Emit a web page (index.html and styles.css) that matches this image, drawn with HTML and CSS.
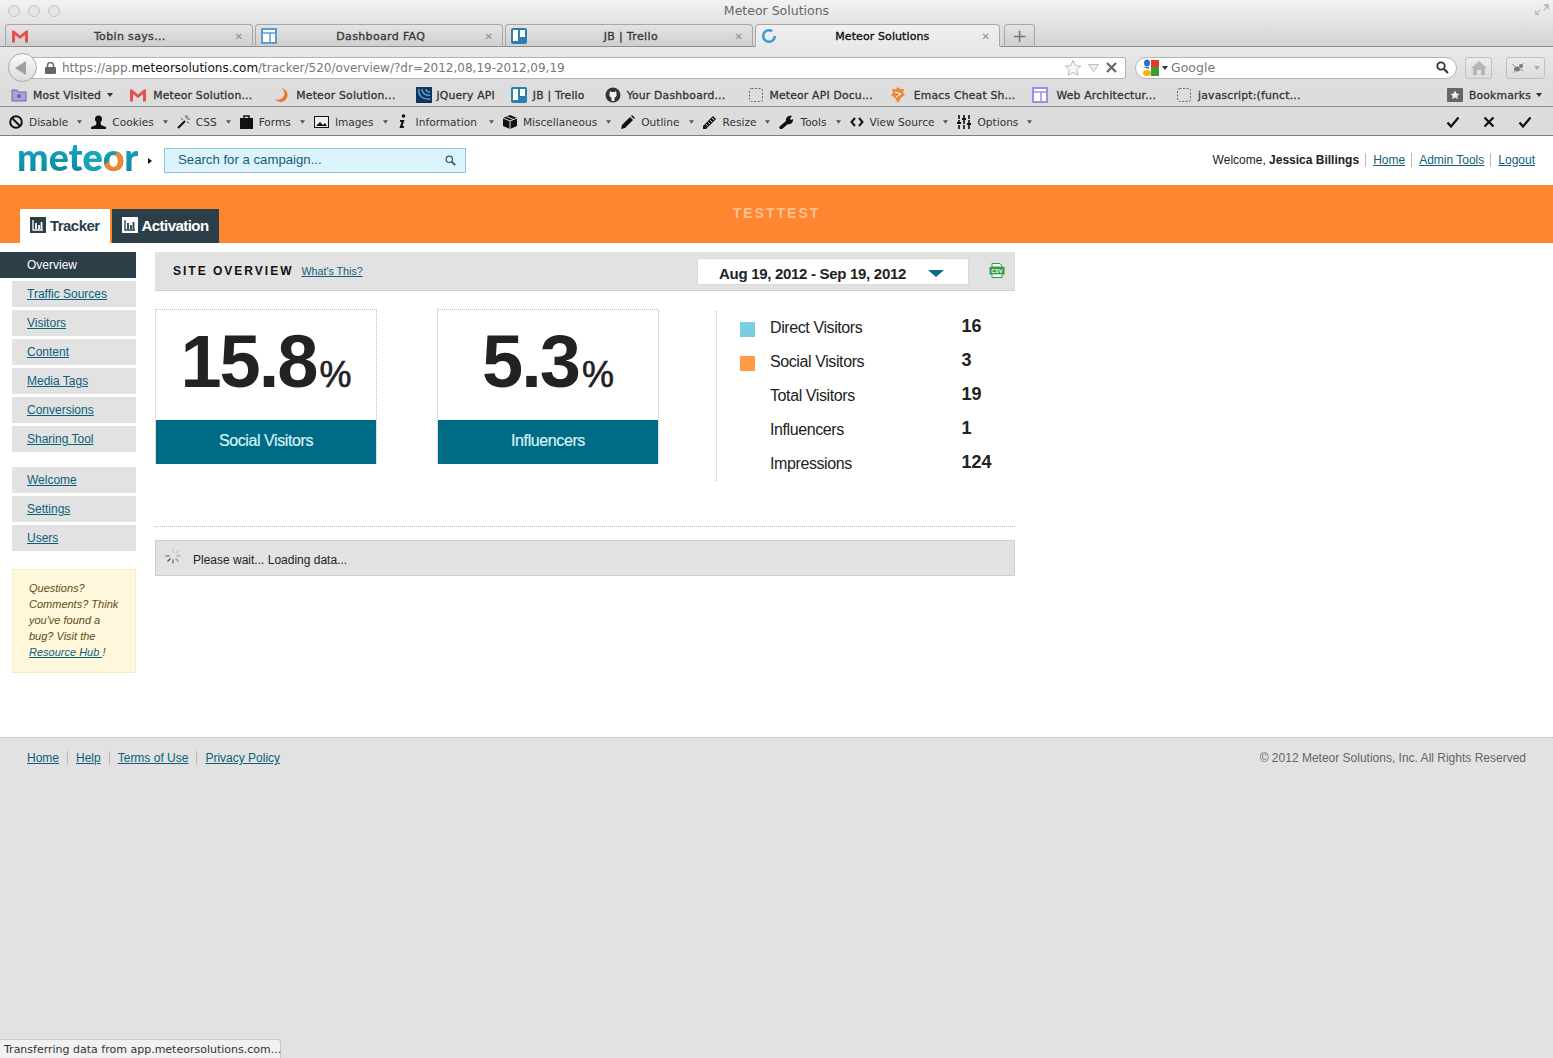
FILE: index.html
```html
<!DOCTYPE html>
<html lang="en">
<head>
<meta charset="utf-8">
<title>Meteor Solutions</title>
<link rel="stylesheet" href="styles.css">
</head>
<body>
<svg class="defs" width="0" height="0" aria-hidden="true">
  <symbol id="gm" viewBox="0 0 18 14"><path d="M1 1.500h2l6 5 6-5h2v12h-3V6l-5 4-5-4v7.500H1z" fill="#e2504f"/></symbol>
  <symbol id="tpl" viewBox="0 0 16 16"><rect x="1" y="1" width="14" height="14" fill="#fff" stroke="#5b9bd5" stroke-width="2"/><path d="M1 5h14M9 5v10" stroke="#5b9bd5" stroke-width="1.500"/></symbol>
  <symbol id="tre" viewBox="0 0 16 16"><rect width="16" height="16" rx="2" fill="#2a7fb0"/><rect x="2" y="2" width="5" height="11" fill="#fff"/><rect x="9" y="2" width="5" height="7" fill="#fff"/></symbol>
  <symbol id="dash" viewBox="0 0 14 14"><rect x=".5" y=".5" width="13" height="13" rx="2" fill="none" stroke="#666" stroke-dasharray="2 1.500"/></symbol>
  <symbol id="down" viewBox="0 0 6 4"><path d="M0 0h6L3 4z" fill="currentColor"/></symbol>
  <symbol id="chart" viewBox="0 0 16 16"><rect width="16" height="16" fill="currentColor"/><path d="M3 3v10h10" stroke="var(--bars)" stroke-width="1.300" fill="none"/><path d="M6 6v6M9 8v4M11.500 5v7" stroke="var(--bars)" stroke-width="1.800" fill="none"/></symbol>
  <symbol id="check" viewBox="0 0 14 12"><path d="M1.500 6.500 5 10.500 12.500 1.500" fill="none" stroke="#111" stroke-width="2.200"/></symbol>
</svg>

<header class="chrome">
  <div class="titlebar">
    <div class="lights"><i></i><i></i><i></i></div>
    <div class="wintitle">Meteor Solutions</div>
    <svg class="expand" width="16" height="16" viewBox="0 0 16 16"><path d="M9 2h6v6l-2-2-3 3-1-1 3-3zM1 8l2 2 3-3 1 1-3 3 2 2H1z" fill="#bdbdbd"/></svg>
  </div>
  <div class="tabstrip">
    <div class="tab"><svg class="fav" width="18" height="14"><use href="#gm"/></svg><span class="tabtext tabtext-first">Tobin says...</span><span class="tabx">✕</span></div>
    <div class="tab"><svg class="fav" width="16" height="16"><use href="#tpl"/></svg><span class="tabtext">Dashboard FAQ</span><span class="tabx">✕</span></div>
    <div class="tab"><svg class="fav" width="16" height="16"><use href="#tre"/></svg><span class="tabtext">JB | Trello</span><span class="tabx">✕</span></div>
    <div class="tab tab-active"><svg class="fav" width="16" height="16" viewBox="0 0 16 16"><circle cx="8" cy="8" r="5.800" fill="none" stroke="#3a9bd8" stroke-width="2.600" stroke-dasharray="30 6.500"/></svg><span class="tabtext">Meteor Solutions</span><span class="tabx">✕</span></div>
    <div class="tab tab-new">+</div>
  </div>
  <div class="navbar">
    <button class="back" type="button"><svg width="12" height="14" viewBox="0 0 12 14"><path d="M11 0v14L0 7z" fill="#a0a0a0"/></svg></button>
    <div class="urlbar">
      <svg width="11" height="12" viewBox="0 0 11 12"><path d="M2.500 5V3.500a3 3 0 0 1 6 0V5" fill="none" stroke="#666" stroke-width="1.500"/><rect y="5" width="11" height="7" rx="1" fill="#666"/></svg>
      <span class="url">https://app.<b>meteorsolutions.com</b>/tracker/520/overview/?dr=2012,08,19-2012,09,19</span>
      <svg class="star" width="18" height="18" viewBox="0 0 18 18"><path d="M9 1.500l2.300 5 5.400.6-4 3.700 1.100 5.400L9 13.500 4.200 16.200l1.100-5.400-4-3.700 5.400-.6z" fill="#f6f6f6" stroke="#bbb"/></svg>
      <svg class="dropv" width="11" height="8" viewBox="0 0 11 8"><path d="M.5.500h10L5.500 7.500z" fill="#eee" stroke="#bbb"/></svg>
      <svg width="11" height="11" viewBox="0 0 11 11"><path d="M1 1l9 9M10 1l-9 9" stroke="#666" stroke-width="2.200"/></svg>
    </div>
    <div class="searchbar">
      <svg width="18" height="18" viewBox="0 0 18 18"><rect x="9" y="1" width="8" height="7" fill="#e53b2e"/><rect x="9" y="8" width="8" height="9" fill="#3f9c35"/><ellipse cx="5" cy="4" rx="3" ry="3.500" fill="#2a6fd0"/><ellipse cx="5" cy="14" rx="4" ry="3" fill="#f4b400"/><path d="M1 8h6v2z" fill="#2a6fd0"/></svg>
      <svg class="mini" width="6" height="4"><use href="#down"/></svg>
      <span class="searchtext">Google</span>
      <svg class="glass" width="13" height="13" viewBox="0 0 13 13"><circle cx="5" cy="5" r="3.700" fill="none" stroke="#333" stroke-width="1.800"/><path d="M8 8l4 4" stroke="#333" stroke-width="2.200"/></svg>
    </div>
    <button class="navbtn home" type="button"><svg width="16" height="14" viewBox="0 0 16 14"><path d="M8 0l8 7h-2v7h-4V9H6v5H2V7H0z" fill="#b5b5b5"/></svg></button>
    <button class="navbtn ext" type="button"><svg width="16" height="12" viewBox="0 0 16 12"><ellipse cx="6" cy="7" rx="3" ry="2.500" fill="#777"/><circle cx="10" cy="4" r="2" fill="#777"/><path d="M1 2l4 3M13 1l-3 3M2 11l3-3M12 9L9 7" stroke="#999"/></svg><svg class="mini pale" width="6" height="4"><use href="#down"/></svg></button>
  </div>
  <nav class="bookmarks">
    <div class="bm bm-mv"><svg width="16" height="14" viewBox="0 0 16 14"><path d="M1 2h5l1 2h8v9H1z" fill="#a9a3dc" stroke="#6c66a8"/><circle cx="8" cy="8" r="2" fill="#6c66a8"/></svg><span>Most Visited</span><svg class="mini" width="6" height="4"><use href="#down"/></svg></div>
    <div class="bm bm-g1"><svg width="18" height="14"><use href="#gm"/></svg><span>Meteor Solution...</span></div>
    <div class="bm bm-g2"><svg width="16" height="16" viewBox="0 0 16 16"><path d="M8 1a7 7 0 0 1-1 14 7 7 0 0 1-5-3 6.500 6.500 0 0 0 9-3 6 6 0 0 0-3-8z" fill="#f0711c"/></svg><span>Meteor Solution...</span></div>
    <div class="bm bm-g3"><svg width="16" height="16" viewBox="0 0 16 16"><rect width="16" height="16" fill="#12345a"/><path d="M3 2c-1 6 3 11 11 10M6 2c0 4 3 7 8 6M10 2c0 2 2 3 4 3" fill="none" stroke="#5aa9e6" stroke-width="1.400"/></svg><span>jQuery API</span></div>
    <div class="bm bm-g4"><svg width="16" height="16"><use href="#tre"/></svg><span>JB | Trello</span></div>
    <div class="bm bm-g5"><svg width="16" height="16" viewBox="0 0 16 16"><circle cx="8" cy="8" r="7.500" fill="#333"/><path d="M5 4l1.500 1h3L11 4l.5 2.500c.6 2.500-.8 4-2 4.200V14h-3v-3.300c-1.200-.2-2.600-1.700-2-4.200z" fill="#f3f3f3"/></svg><span>Your Dashboard...</span></div>
    <div class="bm bm-g6"><svg width="14" height="14"><use href="#dash"/></svg><span>Meteor API Docu...</span></div>
    <div class="bm bm-g7"><svg width="14" height="16" viewBox="0 0 14 16"><path d="M7 0l2 2 4 0-1 4 2 2-4 3-3 5-3-5-4-3 2-2-1-4h4z" fill="#ec8a3c"/><path d="M4 5l6 2-5 3" stroke="#fff" fill="none"/></svg><span>Emacs Cheat Sh...</span></div>
    <div class="bm bm-g8"><svg width="16" height="16" viewBox="0 0 16 16"><rect x="1" y="1" width="14" height="14" fill="#fff" stroke="#9a8fe0" stroke-width="2"/><path d="M1 5h14M9 5v10" stroke="#9a8fe0" stroke-width="1.500"/></svg><span>Web Architectur...</span></div>
    <div class="bm bm-g9"><svg width="14" height="14"><use href="#dash"/></svg><span>javascript:(funct...</span></div>
    <div class="bm bm-all"><svg width="16" height="14" viewBox="0 0 16 14"><rect width="16" height="14" rx="1" fill="#666"/><path d="M8 2.500l1.500 3 3 .4-2.200 2.100.6 3L8 9.500l-2.900 1.500.6-3L3.500 5.900l3-.4z" fill="#eee"/></svg><span>Bookmarks</span><svg class="mini" width="6" height="4"><use href="#down"/></svg></div>
  </nav>
  <nav class="devbar">
    <div class="dev"><svg width="14" height="14" viewBox="0 0 14 14"><circle cx="7" cy="7" r="5.800" fill="none" stroke="#111" stroke-width="2"/><path d="M3 3l8 8" stroke="#111" stroke-width="2"/></svg><span>Disable</span><svg class="mini" width="5" height="4"><use href="#down"/></svg></div>
    <div class="dev"><svg width="15" height="14" viewBox="0 0 15 14"><circle cx="7.500" cy="4" r="3.500" fill="#111"/><path d="M5.500 7h4l.5 3 5 2v2H0v-2l5-2z" fill="#111"/></svg><span>Cookies</span><svg class="mini" width="5" height="4"><use href="#down"/></svg></div>
    <div class="dev"><svg width="13" height="14" viewBox="0 0 13 14"><path d="M1 13l7-7" stroke="#111" stroke-width="2"/><path d="M9 0v3M13 4h-3M4 3l2 2M12 8l-2-1M11 1L9.500 3" stroke="#555"/></svg><span>CSS</span><svg class="mini" width="5" height="4"><use href="#down"/></svg></div>
    <div class="dev"><svg width="13" height="14" viewBox="0 0 13 14"><rect y="3" width="13" height="11" fill="#111"/><path d="M4 3V1h5v2" fill="none" stroke="#111" stroke-width="1.500"/></svg><span>Forms</span><svg class="mini" width="5" height="4"><use href="#down"/></svg></div>
    <div class="dev"><svg width="15" height="12" viewBox="0 0 15 12"><rect x=".5" y=".5" width="14" height="11" fill="#eee" stroke="#111"/><path d="M2 10l4-4 3 3 2-2 2 3z" fill="#111"/></svg><span>Images</span><svg class="mini" width="5" height="4"><use href="#down"/></svg></div>
    <div class="dev dev-info"><svg width="10" height="15" viewBox="0 0 10 15"><circle cx="6.500" cy="2" r="1.800" fill="#111"/><path d="M3 6h4.500L5.500 12l2 .3-1 1.700H2.500L4.500 8 3 7.800z" fill="#111"/></svg><span>Information</span><svg class="mini" width="5" height="4"><use href="#down"/></svg></div>
    <div class="dev"><svg width="14" height="14" viewBox="0 0 14 14"><path d="M7 0l7 3v8l-7 3-7-3V3z" fill="#111"/><path d="M0 3l7 3 7-3M7 6v8M3.500 1.500l7 3" stroke="#ddd" fill="none"/></svg><span>Miscellaneous</span><svg class="mini" width="5" height="4"><use href="#down"/></svg></div>
    <div class="dev"><svg width="15" height="14" viewBox="0 0 15 14"><path d="M1 14l1-4 8-8 3 3-8 8z" fill="#111"/><path d="M11 1l1-1 3 3-1 1z" fill="#111"/></svg><span>Outline</span><svg class="mini" width="5" height="4"><use href="#down"/></svg></div>
    <div class="dev"><svg width="14" height="14" viewBox="0 0 14 14"><path d="M0 11L10 1l3 3L3 14H0z" fill="#111"/><path d="M3 9l2 2M5 7l2 2M7 5l2 2M9 3l2 2" stroke="#ddd"/></svg><span>Resize</span><svg class="mini" width="5" height="4"><use href="#down"/></svg></div>
    <div class="dev"><svg width="15" height="14" viewBox="0 0 15 14"><path d="M1 14l-1-2 7-6c-.6-3 2-6 6-5l-2 2.500 1 1.500 2-1c.5 3-2 6-5 5l-6 5z" fill="#111"/></svg><span>Tools</span><svg class="mini" width="5" height="4"><use href="#down"/></svg></div>
    <div class="dev"><svg width="14" height="10" viewBox="0 0 14 10"><path d="M5 1L1.500 5 5 9M9 1l3.500 4L9 9" fill="none" stroke="#111" stroke-width="2"/></svg><span>View Source</span><svg class="mini" width="5" height="4"><use href="#down"/></svg></div>
    <div class="dev"><svg width="14" height="14" viewBox="0 0 14 14"><path d="M2 0v14M7 0v14M12 0v14" stroke="#111" stroke-width="1.600" stroke-dasharray="4 1"/><path d="M0 8h4M5 4h4M10 9h4" stroke="#111" stroke-width="2"/></svg><span>Options</span><svg class="mini" width="5" height="4"><use href="#down"/></svg></div>
    <div class="devright">
      <svg width="14" height="12"><use href="#check"/></svg>
      <svg width="12" height="12" viewBox="0 0 12 12"><path d="M1.500 1.500l9 9M10.500 1.500l-9 9" stroke="#111" stroke-width="2.300"/></svg>
      <svg width="14" height="12"><use href="#check"/></svg>
    </div>
  </nav>
</header>

<div class="page">
  <div class="sitehead">
    <div class="logo">met<span class="logo-e">e</span><span class="logo-o">o</span>r</div>
    <span class="caret"></span>
    <div class="campaign"><span>Search for a campaign...</span><svg width="11" height="11" viewBox="0 0 11 11"><circle cx="4.300" cy="4.300" r="3.200" fill="none" stroke="#1c5f78" stroke-width="1.200"/><path d="M6.800 6.800l3.400 3.400" stroke="#1c5f78" stroke-width="1.800"/></svg></div>
    <div class="welcome"><span class="hello">Welcome, <b>Jessica Billings</b></span><a href="#">Home</a><a href="#">Admin Tools</a><a href="#">Logout</a></div>
  </div>

  <div class="band">
    <div class="bandtabs">
      <a class="bandtab bandtab-on" href="#"><svg width="16" height="16"><use href="#chart"/></svg>Tracker</a>
      <a class="bandtab bandtab-off" href="#"><svg width="16" height="16"><use href="#chart"/></svg>Activation</a>
    </div>
    <div class="bandtitle">TESTTEST</div>
  </div>

  <div class="main">
    <aside class="side">
      <ul class="menu">
        <li class="active"><a href="#">Overview</a></li>
        <li><a href="#">Traffic Sources</a></li>
        <li><a href="#">Visitors</a></li>
        <li><a href="#">Content</a></li>
        <li><a href="#">Media Tags</a></li>
        <li><a href="#">Conversions</a></li>
        <li><a href="#">Sharing Tool</a></li>
      </ul>
      <ul class="menu menu2">
        <li><a href="#">Welcome</a></li>
        <li><a href="#">Settings</a></li>
        <li><a href="#">Users</a></li>
      </ul>
      <div class="note">Questions? Comments? Think you've found a bug? Visit the <a href="#">Resource Hub </a>!</div>
    </aside>

    <section class="content">
      <div class="conthead">
        <h1>SITE OVERVIEW</h1>
        <a class="whats" href="#">What's This?</a>
        <div class="daterange"><span>Aug 19, 2012 - Sep 19, 2012</span><i class="tri"></i></div>
        <svg class="csv" width="16" height="15" viewBox="0 0 16 15"><path d="M3 3V.5h8L13 3v1H3z" fill="#fff" stroke="#2f9a3f"/><rect x=".5" y="4" width="15" height="7.500" fill="#2f9a3f"/><text x="8" y="10.200" class="csvtext">CSV</text><path d="M3 11.500v3h10v-3" fill="#fff" stroke="#2f9a3f"/></svg>
      </div>

      <div class="stats">
        <div class="card">
          <div class="big">15.8<small>%</small></div>
          <div class="cardlabel">Social Visitors</div>
        </div>
        <div class="card">
          <div class="big">5.3<small>%</small></div>
          <div class="cardlabel">Influencers</div>
        </div>
        <dl class="legend">
          <div class="row row1"><i class="sw sw-blue"></i><dt>Direct Visitors</dt><dd>16</dd></div>
          <div class="row"><i class="sw sw-orange"></i><dt>Social Visitors</dt><dd>3</dd></div>
          <div class="row"><i class="sw"></i><dt>Total Visitors</dt><dd>19</dd></div>
          <div class="row"><i class="sw"></i><dt>Influencers</dt><dd>1</dd></div>
          <div class="row"><i class="sw"></i><dt>Impressions</dt><dd>124</dd></div>
        </dl>
      </div>

      <div class="loading">
        <svg width="16" height="16" viewBox="0 0 16 16"><g stroke-width="1.500" stroke-linecap="round"><path d="M8 1v3" stroke="#ccc"/><path d="M13 3l-2 2" stroke="#c4c4c4"/><path d="M15 8h-3" stroke="#b5b5b5"/><path d="M13 13l-2-2" stroke="#999"/><path d="M8 15v-3" stroke="#777"/><path d="M3 13l2-2" stroke="#555"/><path d="M1 8h3" stroke="#888"/><path d="M3 3l2 2" stroke="#ddd"/></g></svg>
        <span>Please wait... Loading data...</span>
      </div>
    </section>
  </div>

  <footer class="foot">
    <div class="footlinks"><a href="#">Home</a><a href="#">Help</a><a href="#">Terms of Use</a><a href="#">Privacy Policy</a></div>
    <div class="copy">© 2012 Meteor Solutions, Inc. All Rights Reserved</div>
  </footer>
</div>

<div class="status">Transferring data from app.meteorsolutions.com...</div>
</body>
</html>
```

FILE: styles.css
```css
* { box-sizing: border-box; }
html, body { margin: 0; height: 100%; overflow: hidden; }
body { display: flex; flex-direction: column; font-family: "Liberation Sans", Arial, sans-serif; background: #fff; color: #222; height: 1058px; position: relative; }
a { color: #0e5f79; }
.defs { position: absolute; }
svg { display: block; flex: none; }
ul { list-style: none; margin: 0; padding: 0; }

/* browser chrome */
.chrome { flex: none; font-family: "DejaVu Sans", sans-serif; font-size: 11px; color: #333; }
.titlebar { height: 24px; display: flex; align-items: center; position: relative; background: linear-gradient(#f2f2f2, #e2e2e2); }
.lights { display: flex; gap: 8px; padding: 0 0 3px 8px; }
.lights i { width: 12px; height: 12px; border-radius: 50%; border: 1px solid #c3c3c3; background: #e6e6e6; }
.wintitle { position: absolute; left: 0; right: 0; top: 3px; text-align: center; font-size: 12.500px; line-height: 16px; color: #666; }
.expand { margin-left: auto; margin-right: 3px; margin-top: -5px; }
.tabstrip { height: 23px; display: flex; padding-left: 5px; gap: 2px; align-items: flex-end; background: linear-gradient(#e2e2e2, #d4d4d4); border-bottom: 1px solid #8f8f8f; }
.tab { width: 248px; height: 23px; margin-bottom: -1px; display: flex; align-items: center; padding: 1px 9px 0 5px; border: 1px solid #a8a8a8; border-bottom-color: #8f8f8f; border-radius: 4px 4px 0 0; background: linear-gradient(#e4e4e4, #cfcfcf); }
.tab-active { width: 245px; background: linear-gradient(#f0f0f0, #e9e9e9); border-bottom-color: #e9e9e9; color: #111; }
.tab-new { width: 31px; margin-left: 2px; justify-content: center; padding: 0; font-size: 18px; color: #777; }
.fav { flex: none; }
.tabtext { flex: 1; text-align: center; color: #3a3a3a; letter-spacing: .35px; -webkit-text-stroke: .35px #3a3a3a; }
.tabtext-first { padding-right: 4px; }
.tab-active .tabtext { color: #111; -webkit-text-stroke-color: #111; letter-spacing: .1px; padding-left: 6px; }
.tabx { color: #8d8d8d; font-size: 10px; font-weight: 700; }

.navbar { height: 36px; display: flex; align-items: center; padding: 5px 0 0 8px; background: linear-gradient(#e9e9e9, #dddddd); }
.back { width: 29px; height: 29px; border-radius: 50%; border: 1px solid #aaa; background: linear-gradient(#fafafa, #dcdcdc); display: flex; align-items: center; justify-content: center; padding: 0 3px 0 0; position: relative; z-index: 1; }
.urlbar { width: 1095px; margin-left: -6px; height: 22px; padding: 0 8px 0 14px; display: flex; align-items: center; background: #fff; border: 1px solid #b4b4b4; border-left: 0; border-radius: 0 3px 3px 0; }
.url { margin-left: 6px; font-size: 12px; color: #777; flex: 1; white-space: nowrap; }
.url b { font-weight: 400; color: #111; }
.star { margin-right: 6px; }
.dropv { margin-right: 7px; }
.searchbar { width: 322px; margin-left: 9px; height: 22px; padding: 0 7px 0 6px; display: flex; align-items: center; background: #fff; border: 1px solid #b4b4b4; border-radius: 11px; }
.searchtext { margin-left: 3px; font-size: 12.500px; color: #777; flex: 1; }
.mini { color: #333; margin-left: 2px; }
.pale { color: #aaa; margin-left: 7px; }
.navbtn { height: 22px; display: flex; align-items: center; justify-content: center; padding: 0; border: 1px solid #c0c0c0; border-radius: 3px; background: linear-gradient(#ececec, #dcdcdc); }
.home { width: 27px; margin-left: 8px; }
.ext { width: 39px; margin-left: 14px; }

.bookmarks { height: 24px; display: flex; align-items: center; padding: 1px 0 0 11px; background: #dddddd; border-bottom: 1px solid #8f8f8f; font-size: 10.800px; color: #333; letter-spacing: .2px; -webkit-text-stroke: .3px #333; white-space: nowrap; }
.bm { display: flex; align-items: center; gap: 6px; }
.bm-mv .mini { margin-left: 0; }
.bm-g1 { margin-left: 16px; }
.bm-g2 { margin-left: 21px; gap: 7px; }
.bm-g3 { margin-left: 20px; gap: 5px; }
.bm-g4 { margin-left: 16px; }
.bm-g5 { margin-left: 20px; }
.bm-g6 { margin-left: 24px; }
.bm-g7 { margin-left: 18px; gap: 9px; }
.bm-g8 { margin-left: 17px; gap: 8px; }
.bm-g9 { margin-left: 21px; gap: 7px; }
.bm-all { margin-left: auto; margin-right: 11px; }
.bm-all .mini { margin-left: -1px; }

.devbar { height: 29px; display: flex; align-items: center; gap: 9px; padding: 1px 21px 0 9px; background: #dcdcdc; border-bottom: 1px solid #7f7f7f; font-size: 10.600px; color: #333; white-space: nowrap; }
.dev { display: flex; align-items: center; gap: 6px; }
.dev .mini { margin-left: 3px; color: #555; }
.dev-info { gap: 9px; }
.devright { margin-left: auto; display: flex; align-items: center; gap: 23px; }

/* page */
.page { flex: 1; display: flex; flex-direction: column; min-height: 0; }
.sitehead { height: 49px; flex: none; display: flex; align-items: center; padding: 0 18px; }
.logo { width: 121px; margin: -7px 0 0 -1px; font-family: Lato, sans-serif; font-size: 37.500px; font-weight: 900; line-height: 46px; color: #0f9fbd; background: linear-gradient(#16b3c9, #0b7f9a); -webkit-background-clip: text; background-clip: text; -webkit-text-fill-color: transparent; white-space: nowrap; }
.logo-e { -webkit-text-fill-color: #16a3bd; }
.logo-o { -webkit-text-fill-color: transparent; background: linear-gradient(135deg, transparent 50%, #f2842c 50%); -webkit-background-clip: text; background-clip: text; }
.caret { width: 0; height: 0; margin-left: 10px; border-left: 4px solid #111; border-top: 3px solid transparent; border-bottom: 3px solid transparent; }
.campaign { width: 302px; height: 25px; margin-left: 12px; display: flex; align-items: center; justify-content: space-between; padding: 0 9px 0 13px; background: #ddf3fc; border: 1px solid #8fc6dc; font-size: 13.200px; color: #0f5f79; }
.campaign span { margin-top: -3px; }
.welcome { margin-left: auto; margin-bottom: 2px; display: flex; align-items: center; font-size: 12px; }
.welcome a { padding: 0 6px 0 7px; border-left: 1px solid #bbb; line-height: 14px; }
.welcome a:last-child { padding-right: 0; }
.hello { margin-right: 6px; color: #222; }

.band { height: 58px; flex: none; background: #ff8631; position: relative; display: flex; align-items: flex-end; padding-left: 20px; }
.bandtabs { display: flex; gap: 2px; }
.bandtab { height: 34px; display: flex; align-items: center; gap: 4px; padding: 0 10px 2px; font-size: 15px; font-weight: 700; text-decoration: none; letter-spacing: -.55px; }
.bandtab-on { background: #fff; color: #2c3e48; --bars: #fff; }
.bandtab-on svg { color: #2c3e48; }
.bandtab-off { background: #2c3e48; color: #fff; --bars: #2c3e48; }
.bandtab-off svg { color: #fff; }
.bandtitle { position: absolute; left: 0; right: 0; top: 20px; text-align: center; font-size: 14px; line-height: 16px; font-weight: 700; letter-spacing: 2px; color: #ffc08f; }

.main { flex: none; height: 494px; display: flex; padding-top: 9px; }
.side { width: 155px; flex: none; padding-right: 19px; font-size: 12px; }
.menu { display: flex; flex-direction: column; gap: 3px; }
.menu li { height: 26px; margin-left: 12px; background: #e2e2e2; padding-left: 15px; line-height: 26px; }
.menu .active { margin-left: 0; padding-left: 27px; background: #2c3e48; }
.menu .active a { color: #fff; text-decoration: none; }
.menu2 { margin-top: 15px; }
.note { margin: 18px 0 0 12px; height: 104px; padding: 10px 10px 0 16px; background: #fff8dd; border: 1px solid #f9ecc4; font-size: 11px; line-height: 16px; font-style: italic; color: #5e4a17; }
.content { width: 860px; flex: none; }
.conthead { height: 39px; background: #e2e2e2; border-bottom: 1px solid #d0d0d0; display: flex; align-items: center; padding-left: 18px; position: relative; }
.conthead h1 { margin: 0; font-size: 12px; line-height: 36px; letter-spacing: 2px; font-weight: 700; color: #111; }
.whats { margin-left: 8px; font-size: 10.700px; }
.daterange { width: 272px; height: 27px; margin-left: auto; margin-right: 46px; margin-top: 1px; display: flex; align-items: center; justify-content: space-between; padding: 3px 24px 0 21px; background: #fff; border: 1px solid #d9d9d9; font-size: 15px; font-weight: 700; letter-spacing: -.3px; color: #222; }
.tri { width: 0; height: 0; border-top: 7px solid #0b6c87; border-left: 8px solid transparent; border-right: 8px solid transparent; }
.csv { position: absolute; right: 10px; top: 11px; }
.csvtext { font-size: 5.500px; font-weight: 700; text-anchor: middle; fill: #fff; }

.stats { display: flex; margin-top: 18px; height: 218px; border-bottom: 1px dotted #bdbdbd; }
.card { width: 222px; flex: none; height: 155px; margin-right: 60px; display: flex; flex-direction: column; border: 1px dotted #bdbdbd; }
.big { height: 110px; flex: none; text-align: center; font-size: 74px; line-height: 104px; font-weight: 700; letter-spacing: -2px; color: #222; white-space: nowrap; }
.big small { font-size: 36px; font-weight: 400; letter-spacing: 0; margin-left: 3px; -webkit-text-stroke: .6px #222; }
.cardlabel { height: 44px; margin-bottom: -1px; background: #006b85; color: #d7f2f8; text-align: center; font-size: 16px; line-height: 42px; letter-spacing: -.4px; -webkit-text-stroke: .2px #d7f2f8; }
.legend { flex: none; margin: 2px 0 0 -3px; width: 299px; height: 170px; padding-left: 23px; border-left: 1px dotted #bdbdbd; font-size: 16px; letter-spacing: -.4px; }
.row { height: 34px; display: flex; align-items: center; }
.sw { width: 15px; height: 15px; flex: none; margin: 2px 15px 0 0; }
.sw-blue { background: #79cfe2; }
.sw-orange { background: #ff9b45; }
dt { width: 191.500px; }
dd { margin: -4px 0 0; font-size: 18px; font-weight: 700; letter-spacing: 0; color: #222; }
.loading { height: 36px; margin-top: 13px; display: flex; align-items: center; gap: 12px; padding-left: 9px; background: #e2e2e2; border: 1px solid #cfcfcf; font-size: 12px; color: #222; }
.loading svg { margin-top: -5px; }
.loading span { margin-top: 3px; }

.foot { flex: 1; min-height: 0; background: #e2e2e2; border-top: 1px dotted #bdbdbd; display: flex; justify-content: space-between; align-items: flex-start; padding: 13px 27px 0; font-size: 12px; }
.footlinks { display: flex; }
.footlinks a { padding: 0 8px; border-left: 1px solid #bbb; line-height: 14px; }
.footlinks a:first-child { padding-left: 0; border: 0; }
.copy { color: #666; }

.status { position: absolute; left: 0; bottom: 0; width: 281px; height: 19px; padding: 2px 0 0 4px; font-family: "DejaVu Sans", sans-serif; font-size: 11px; line-height: 16px; color: #333; background: #f1f1f1; border: 1px solid #c9c9c9; border-left: 0; border-bottom: 0; border-radius: 0 3px 0 0; white-space: nowrap; }
```
